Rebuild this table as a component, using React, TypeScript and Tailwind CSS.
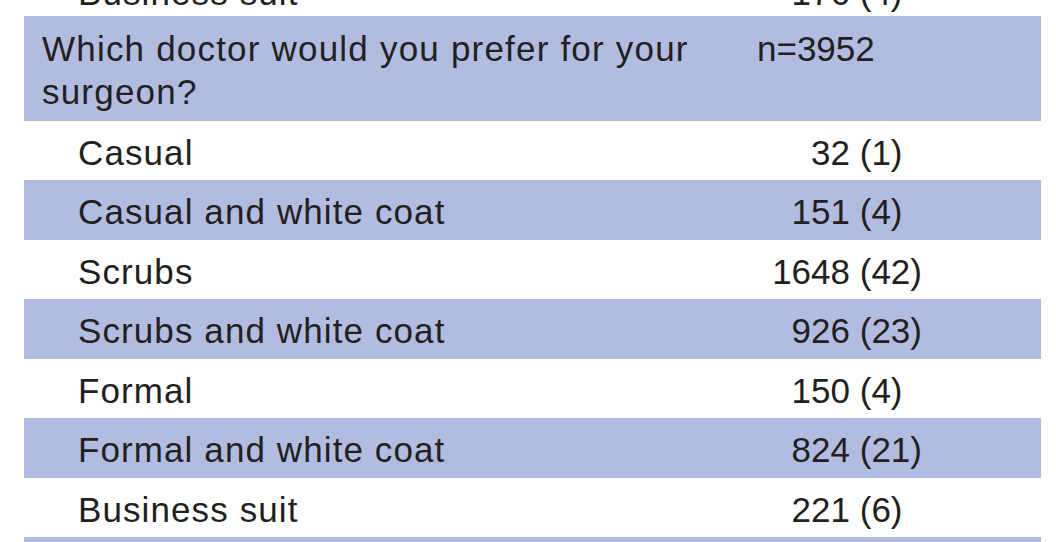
const rows: { label: string; n: string; pct: string }[] = [
  { label: "Casual", n: "32", pct: "(1)" },
  { label: "Casual and white coat", n: "151", pct: "(4)" },
  { label: "Scrubs", n: "1648", pct: "(42)" },
  { label: "Scrubs and white coat", n: "926", pct: "(23)" },
  { label: "Formal", n: "150", pct: "(4)" },
  { label: "Formal and white coat", n: "824", pct: "(21)" },
  { label: "Business suit", n: "221", pct: "(6)" },
];

const band = "bg-[#b2bce0]";

function Count({ n, pct }: { n: string; pct: string }) {
  return (
    <div className="flex">
      <span className="w-[95px] text-right">{n}</span>
      <span className="whitespace-pre"> {pct}</span>
    </div>
  );
}

export default function App() {
  return (
    <div
      className="h-[542px] w-[1056px] overflow-hidden bg-white text-[35px] leading-[42px] text-[#231f20]"
      style={{ fontFamily: '"Liberation Sans", Arial, sans-serif' }}
    >
      <div className="ml-[24px] w-[1017px]">
        {/* previous section, only the bottom of its last row shows */}
        <div className="h-[16px] overflow-hidden">
          <div className="mt-[-39px] flex pt-[11px]">
            <div className="w-[731px] pl-[54px] tracking-[1.1px]">Business suit</div>
            <Count n="176" pct="(4)" />
          </div>
        </div>

        {/* question header */}
        <div className={`flex h-[105px] pt-[11px] leading-[43px] ${band}`}>
          <div className="w-[731px] pl-[18px] tracking-[1.2px]">
            Which doctor would you prefer for your surgeon?
          </div>
          <div className="pl-[2px]">n=3952</div>
        </div>

        {rows.map((r, i) => (
          <div
            key={r.label}
            className={`flex h-[59.43px] pt-[11px] ${i % 2 === 1 ? band : "bg-white"}`}
          >
            <div className="w-[731px] pl-[54px] tracking-[1.1px]">{r.label}</div>
            <Count n={r.n} pct={r.pct} />
          </div>
        ))}

        <div className={`h-[60px] ${band}`} />
      </div>
    </div>
  );
}
